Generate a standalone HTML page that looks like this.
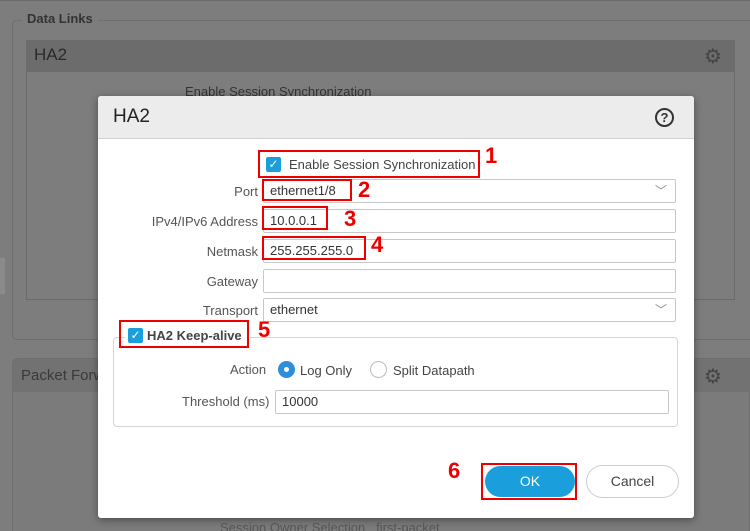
<!DOCTYPE html>
<html><head><meta charset="utf-8"><style>
*{box-sizing:border-box;margin:0;padding:0}
html,body{width:750px;height:531px;overflow:hidden}
body{background:#7d7d7d;font-family:"Liberation Sans","DejaVu Sans",sans-serif;position:relative;color:#333}
.a{position:absolute}
.lbl{position:absolute;font-size:13px;color:#555;text-align:right;width:160px}
.in{position:absolute;left:263px;width:413px;height:24px;border:1px solid #c8c8c8;border-radius:2px;background:#fff;font-size:13px;padding:0 6px;line-height:22px;color:#333}
.red{position:absolute;border:2px solid #e00;}
.num{position:absolute;color:#e00;font-weight:bold;font-size:22px}
.cb{position:absolute;width:15px;height:15px;background:#1a9fdc;border-radius:2px;color:#fff;font-size:12px;line-height:15px;text-align:center}
.chev{position:absolute;right:8px;top:0;color:#888;font-size:12px}
</style></head><body>
<div class="a" style="left:0;top:0;width:750px;height:1px;background:#6a6a6a"></div>
<div class="a" style="left:12px;top:20px;width:750px;height:320px;border:1px solid #6e6e6e;border-radius:5px"></div>
<div class="a" style="left:22px;top:11px;background:#7d7d7d;padding:0 5px;font-size:13px;font-weight:bold;color:#333">Data Links</div>
<div class="a" style="left:26px;top:40px;width:709px;height:260px;border:1px solid #6a6a6a"></div>
<div class="a" style="left:26px;top:40px;width:709px;height:32px;background:#6c6c6c;font-size:17px;padding:5px 8px;color:#2a2a2a">HA2</div>
<div class="a" style="left:704px;top:44px;font-size:20px;color:#444">⚙</div>
<div class="a" style="left:185px;top:84px;font-size:13px;color:#333">Enable Session Synchronization</div>
<div class="a" style="left:12px;top:358px;width:738px;height:173px;border:1px solid #6e6e6e;border-bottom:none;border-radius:5px 0 0 0;background:#7b7b7b"></div>
<div class="a" style="left:13px;top:359px;width:737px;height:33px;background:#727272;font-size:15px;padding:8px 8px;color:#3a3a3a">Packet Forwarding</div>
<div class="a" style="left:704px;top:364px;font-size:20px;color:#444">⚙</div>
<div class="a" style="left:0;top:258px;width:5px;height:36px;background:#8a8a8a"></div>

<div class="a" style="left:98px;top:96px;width:596px;height:422px;background:#fff;border-radius:3px;box-shadow:0 2px 8px rgba(0,0,0,.4);overflow:hidden">
 <div class="a" style="left:0;top:0;width:596px;height:43px;background:#ececec;border-bottom:1px solid #d0d0d0;font-size:19px;padding:10px 15px;color:#222">HA2</div>
 <div class="a" style="left:557px;top:12px;width:19px;height:19px;border:2px solid #333;border-radius:50%;font-size:13px;font-weight:bold;text-align:center;line-height:15px">?</div>
</div>

<div class="cb" style="left:266px;top:157px">✓</div>
<div class="a" style="left:289px;top:157px;font-size:13px;color:#444">Enable Session Synchronization</div>
<div class="red" style="left:258px;top:150px;width:222px;height:28px"></div>
<div class="num" style="left:485px;top:143px">1</div>

<div class="lbl" style="left:98px;top:184px">Port</div>
<div class="in" style="top:179px">ethernet1/8<span class="chev">﹀</span></div>
<div class="red" style="left:262px;top:179px;width:90px;height:22px"></div>
<div class="num" style="left:358px;top:177px">2</div>

<div class="lbl" style="left:98px;top:214px">IPv4/IPv6 Address</div>
<div class="in" style="top:209px">10.0.0.1</div>
<div class="red" style="left:262px;top:206px;width:66px;height:24px"></div>
<div class="num" style="left:344px;top:206px">3</div>

<div class="lbl" style="left:98px;top:244px">Netmask</div>
<div class="in" style="top:239px">255.255.255.0</div>
<div class="red" style="left:262px;top:236px;width:104px;height:24px"></div>
<div class="num" style="left:371px;top:232px">4</div>

<div class="lbl" style="left:98px;top:274px">Gateway</div>
<div class="in" style="top:269px"></div>

<div class="lbl" style="left:98px;top:303px">Transport</div>
<div class="in" style="top:298px">ethernet<span class="chev">﹀</span></div>

<div class="a" style="left:113px;top:337px;width:565px;height:90px;border:1px solid #d5d5d5;border-radius:4px"></div>
<div class="a" style="left:125px;top:327px;width:125px;height:18px;background:#fff"></div>
<div class="cb" style="left:128px;top:328px">✓</div>
<div class="a" style="left:147px;top:328px;font-size:13px;font-weight:bold;color:#444">HA2 Keep-alive</div>
<div class="red" style="left:119px;top:320px;width:130px;height:28px"></div>
<div class="num" style="left:258px;top:317px">5</div>

<div class="a" style="left:230px;top:362px;font-size:13px;color:#555">Action</div>
<div class="a" style="left:278px;top:361px;width:17px;height:17px;border-radius:50%;background:#2d8fdc"><div class="a" style="left:6px;top:6px;width:5px;height:5px;border-radius:50%;background:#fff"></div></div>
<div class="a" style="left:300px;top:363px;font-size:13px;color:#444">Log Only</div>
<div class="a" style="left:370px;top:361px;width:17px;height:17px;border-radius:50%;border:1px solid #bbb"></div>
<div class="a" style="left:393px;top:363px;font-size:13px;color:#444">Split Datapath</div>

<div class="a" style="left:182px;top:394px;font-size:13px;color:#555">Threshold (ms)</div>
<div class="in" style="left:275px;top:390px;width:394px">10000</div>

<div class="num" style="left:448px;top:458px">6</div>
<div class="a" style="left:485px;top:466px;width:90px;height:31px;background:#1a9fdc;border-radius:16px;color:#fff;font-size:14px;text-align:center;line-height:31px">OK</div>
<div class="red" style="left:481px;top:463px;width:96px;height:37px"></div>
<div class="a" style="left:586px;top:465px;width:93px;height:33px;border:1px solid #ccc;border-radius:17px;color:#444;font-size:14px;text-align:center;line-height:31px">Cancel</div>
<div class="a" style="left:220px;top:520px;font-size:13px;color:#555">Session Owner Selection &nbsp; first-packet</div>
</body></html>
